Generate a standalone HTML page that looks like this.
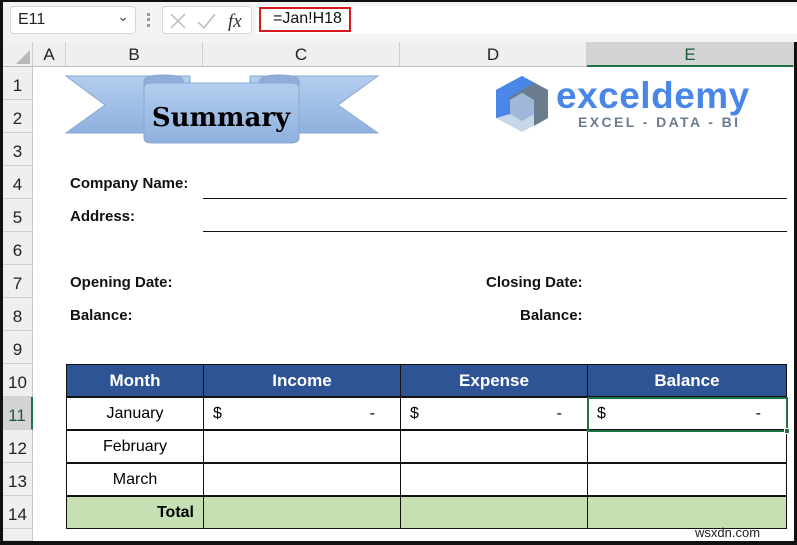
<!DOCTYPE html>
<html><head><style>
*{margin:0;padding:0;box-sizing:border-box}
body{width:797px;height:545px;overflow:hidden;background:#fff;position:relative;font-family:"Liberation Sans",Calibri,sans-serif}
.a{position:absolute}
.rh{position:absolute;left:3px;width:30px;height:33px;background:#efefef;border-bottom:1px solid #d0d0d0;border-right:1px solid #c8c8c8;font-size:17px;color:#222;text-align:center;padding-top:9px}
.ch{position:absolute;top:42px;height:25px;background:#efefef;border-right:1px solid #d0d0d0;border-bottom:1px solid #bdbdbd;font-size:17px;color:#222;text-align:center;line-height:26px}
.lbl{position:absolute;font-weight:bold;font-size:15px;color:#111}
.cell{position:absolute;height:33px;border:1px solid #111;font-size:16px;line-height:31px}
</style></head><body>
<!-- formula bar -->
<div class="a" style="left:0;top:0;width:797px;height:42px;background:#f3f3f3;border-top:2px solid #111"></div>
<div class="a" style="left:10px;top:6px;width:126px;height:28px;background:#fff;border:1px solid #d8d8d8;border-radius:4px;font-size:16px;padding:4px 0 0 7px;color:#222">E11<span style="position:absolute;right:6px;top:1px;font-size:14px;color:#444">&#8964;</span></div>
<div class="a" style="left:147px;top:13px;width:3px;height:14px;border-left:3px dotted #999"></div>
<div class="a" style="left:162px;top:6px;width:90px;height:28px;background:#fff;border:1px solid #d8d8d8;border-radius:4px"></div>
<svg class="a" style="left:168px;top:11px" width="80" height="20"><path d="M3 3L17 17M17 3L3 17" stroke="#bbb" stroke-width="1.5"/><path d="M30 11L36 17L47 3" stroke="#bbb" stroke-width="1.5" fill="none"/><text x="60" y="16" font-family="Liberation Serif" font-style="italic" font-size="19" fill="#333">fx</text></svg>
<div class="a" style="left:256px;top:6px;width:541px;height:28px;background:#fff"></div>
<div class="a" style="left:259px;top:7px;width:92px;height:25px;border:2px solid #d9181e;font-size:16px;padding:1px 0 0 12px;color:#111">=Jan!H18</div>
<!-- frame -->
<div class="a" style="left:0;top:0;width:3px;height:545px;background:#111"></div>
<div class="a" style="left:794px;top:42px;width:3px;height:503px;background:#111"></div>
<div class="a" style="left:0;top:541px;width:797px;height:4px;background:#111"></div>
<!-- col headers -->
<div class="ch" style="left:3px;width:30px"><svg width="28" height="25"><path d="M26 22L26 8L12 22Z" fill="#b8b8b8"/></svg></div>
<div class="ch" style="left:33px;width:33px">A</div>
<div class="ch" style="left:66px;width:137px">B</div>
<div class="ch" style="left:203px;width:197px">C</div>
<div class="ch" style="left:400px;width:187px">D</div>
<div class="ch" style="left:587px;width:207px;background:#d4d4d4;border-bottom:2px solid #217346;color:#1d5a36">E</div>
<!-- row headers -->
<div class="rh" style="top:67px">1</div><div class="rh" style="top:100px">2</div><div class="rh" style="top:133px">3</div><div class="rh" style="top:166px">4</div><div class="rh" style="top:199px">5</div><div class="rh" style="top:232px">6</div><div class="rh" style="top:265px">7</div><div class="rh" style="top:298px">8</div><div class="rh" style="top:331px">9</div><div class="rh" style="top:364px">10</div><div class="rh" style="top:397px;background:#d4d4d4;border-right:2px solid #217346;color:#1d5a36">11</div><div class="rh" style="top:430px">12</div><div class="rh" style="top:463px">13</div><div class="rh" style="top:496px">14</div><div class="rh" style="top:529px;height:12px"></div>
<!-- banner -->
<svg class="a" style="left:60px;top:70px" width="330" height="80">
<defs><linearGradient id="g" x1="0" y1="0" x2="0" y2="1"><stop offset="0" stop-color="#b3cdee"/><stop offset="1" stop-color="#8fb1de"/></linearGradient></defs>
<path d="M6 6H130V63H6L45 35Z" fill="url(#g)" stroke="#8aa8d2"/>
<path d="M318 6H190V63H318L278 35Z" fill="url(#g)" stroke="#8aa8d2"/>
<path d="M84 18V11Q84 5 104 5Q123 5 123 11V18Z" fill="#8eadd8" stroke="#8aa8d2"/>
<path d="M239 18V11Q239 5 219 5Q200 5 200 11V18Z" fill="#8eadd8" stroke="#8aa8d2"/>
<path d="M84 18Q84 13 92 13H231Q239 13 239 18V68Q239 73 231 73H92Q84 73 84 68Z" fill="url(#g)" stroke="#8aa8d2"/>
<text x="161" y="56" text-anchor="middle" font-family="DejaVu Serif" font-weight="bold" font-size="26" fill="#000">Summary</text>
</svg>
<!-- logo -->
<svg class="a" style="left:494px;top:74px" width="60" height="62">
<path d="M28 2L54 16V44L28 58L2 44V16Z" fill="#c6d8e8"/>
<path d="M28 2L54 16V44L40 52V26L28 19L16 26V40L2 44V16Z" fill="#6b7c8f"/>
<path d="M2 16L28 2L40 9L16 23V40L2 44Z" fill="#4a86e8"/>
<path d="M16 26L28 19L40 26V40L28 47L16 40Z" fill="#9fb7d8"/>
</svg>
<div class="a" style="left:556px;top:76px;font-size:37px;font-weight:bold;color:#4a86e8;letter-spacing:0.5px;line-height:40px">exceldemy</div>
<div class="a" style="left:578px;top:114px;font-size:14px;font-weight:bold;color:#6b7c8f;letter-spacing:2.4px">EXCEL - DATA - BI</div>
<!-- labels -->
<div class="lbl" style="left:70px;top:175px">Company Name:</div>
<div class="lbl" style="left:70px;top:208px">Address:</div>
<div class="a" style="left:203px;top:198px;width:584px;height:1px;background:#111"></div>
<div class="a" style="left:203px;top:231px;width:584px;height:1px;background:#111"></div>
<div class="lbl" style="left:70px;top:274px">Opening Date:</div>
<div class="lbl" style="left:70px;top:307px">Balance:</div>
<div class="lbl" style="left:486px;top:274px">Closing Date:</div>
<div class="lbl" style="left:520px;top:307px">Balance:</div>
<!-- table -->
<div class="cell" style="left:66px;top:364px;width:138px;background:#2f5496;color:#fff;font-weight:bold;text-align:center;font-size:17px">Month</div>
<div class="cell" style="left:203px;top:364px;width:198px;background:#2f5496;color:#fff;font-weight:bold;text-align:center;font-size:17px">Income</div>
<div class="cell" style="left:400px;top:364px;width:188px;background:#2f5496;color:#fff;font-weight:bold;text-align:center;font-size:17px">Expense</div>
<div class="cell" style="left:587px;top:364px;width:200px;background:#2f5496;color:#fff;font-weight:bold;text-align:center;font-size:17px">Balance</div>

<div class="cell" style="left:66px;top:397px;width:138px;text-align:center">January</div>
<div class="cell" style="left:203px;top:397px;width:198px;padding:0 25px 0 9px">$<span style="float:right">-</span></div>
<div class="cell" style="left:400px;top:397px;width:188px;padding:0 25px 0 9px">$<span style="float:right">-</span></div>
<div class="cell" style="left:587px;top:397px;width:200px;padding:0 25px 0 9px">$<span style="float:right">-</span></div>

<div class="cell" style="left:66px;top:430px;width:138px;text-align:center">February</div>
<div class="cell" style="left:203px;top:430px;width:198px"></div>
<div class="cell" style="left:400px;top:430px;width:188px"></div>
<div class="cell" style="left:587px;top:430px;width:200px"></div>

<div class="cell" style="left:66px;top:463px;width:138px;text-align:center">March</div>
<div class="cell" style="left:203px;top:463px;width:198px"></div>
<div class="cell" style="left:400px;top:463px;width:188px"></div>
<div class="cell" style="left:587px;top:463px;width:200px"></div>

<div class="cell" style="left:66px;top:496px;width:138px;background:#c6e0b4;text-align:right;padding-right:9px;font-weight:bold">Total</div>
<div class="cell" style="left:203px;top:496px;width:198px;background:#c6e0b4"></div>
<div class="cell" style="left:400px;top:496px;width:188px;background:#c6e0b4"></div>
<div class="cell" style="left:587px;top:496px;width:200px;background:#c6e0b4"></div>
<!-- selection -->
<div class="a" style="left:587px;top:397px;width:201px;height:35px;border:2px solid #217346"></div>
<div class="a" style="left:784px;top:428px;width:6px;height:6px;background:#217346;border:1px solid #fff"></div>
<div class="a" style="left:695px;top:525px;font-size:13px;color:#222">wsxdn.com</div>
</body></html>
